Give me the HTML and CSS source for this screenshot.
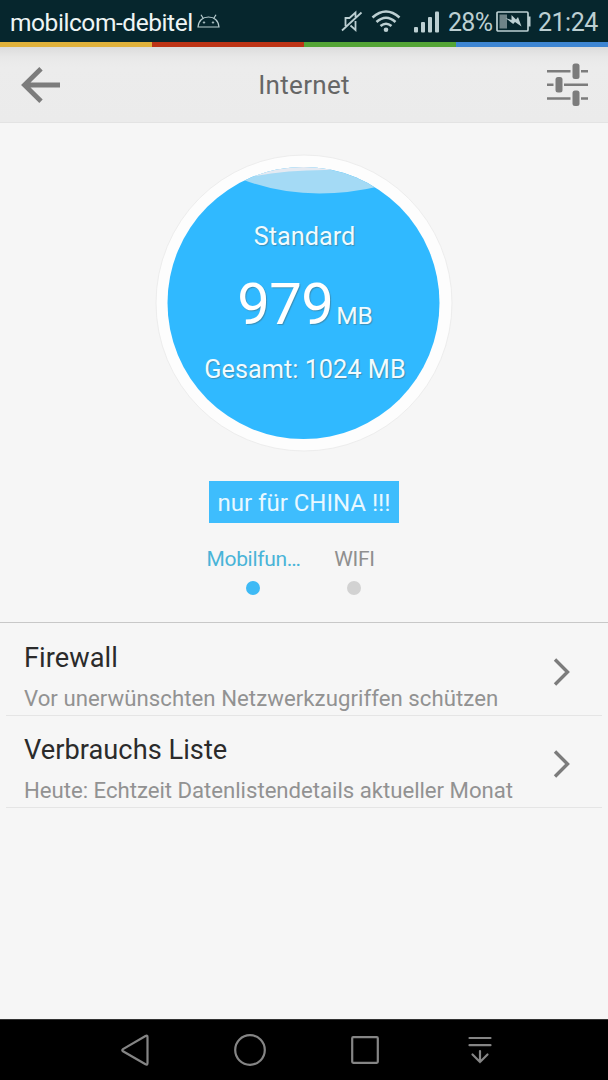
FILE: index.html
```html
<!DOCTYPE html>
<html lang="de">
<head>
<meta charset="utf-8">
<title>Internet</title>
<link rel="stylesheet" href="styles.css">
</head>
<body>
<div class="screen">
  <div class="status">
    <span class="carrier">mobilcom-debitel</span>
    <svg class="droid" width="23" height="14" viewBox="0 0 23 14" fill="none" stroke="#b9cdd0" stroke-width="1.2"><path d="M1 13C1.500 6.500 6 3 11.500 3S21.500 6.500 22 13ZM6 4 4 .700M17 4 19 .700"/><circle cx="7" cy="8.500" r=".8" fill="#b9cdd0" stroke-width=".6"/><circle cx="16" cy="8.500" r=".8" fill="#b9cdd0" stroke-width=".6"/></svg>
    <svg class="mute" width="22" height="23" viewBox="0 0 22 23" fill="none" stroke="#bccfd2" stroke-width="1.800"><path d="M1 20.500 20.500 2.500M4.500 16V8H8.500L14.500 2.500V7M14.500 11V20L9.500 15.500"/></svg>
    <svg class="wifi" width="30" height="23" viewBox="0 0 30 23" fill="none" stroke="#bccfd2" stroke-width="2.600"><path d="M1.500 7.500Q15-4.500 28.500 7.500M5.500 12Q15 3.500 24.500 12M9.500 16Q15 11.500 20.500 16"/><circle cx="15" cy="19.800" r="2.300" fill="#bccfd2" stroke="none"/></svg>
    <svg class="signal" width="26" height="22" viewBox="0 0 26 22" fill="#bccfd2"><rect x="0" y="16" width="4" height="5.500" rx="1"/><rect x="7" y="11" width="4" height="10.500" rx="1"/><rect x="14" y="6" width="4" height="15.500" rx="1"/><rect x="21" y="0.500" width="4" height="21" rx="1"/></svg>
    <span class="percent">28%</span>
    <svg class="battery" width="35" height="21" viewBox="0 0 35 21"><rect x="1" y="1" width="31" height="19" rx="1" fill="none" stroke="#bccfd2" stroke-width="1.700"/><path d="M32 5.500h2.500v10H32z" fill="#bccfd2"/><path d="M3.500 3.500h7.500v14H3.500z" fill="#6f8488"/><path d="m15.500 4 4.500 4.500 2-2.500L25.500 15.500l-6.500-4.500-1.800 2L9.500 7l6 2Z" fill="#bccfd2"/></svg>
    <span class="time">21:24</span>
  </div>
  <div class="stripe"><i class="yellow"></i><i class="red"></i><i class="green"></i><i class="blue"></i></div>
  <header class="header">
    <svg width="40" height="36" viewBox="0 0 40 36" fill="none" stroke="#7c7c7c" stroke-width="4.800"><path d="M39 18H4M20 1.800 3.500 18 20 34.200"/></svg>
    <h1 class="title">Internet</h1>
    <svg width="42" height="44" viewBox="0 0 42 44" fill="#7c7c7c"><path d="M1 7h23.500v2.500H1zM35 7h7v2.500h-7zM1 20.500h6.500V23H1zM18 20.500h24V23H18zM1 34.200h23.500v2.500H1zM35 34.200h7v2.500h-7z"/><rect x="26.500" y="0.500" width="7" height="15.500" rx="2.500"/><rect x="9.500" y="14" width="7" height="15.500" rx="2.500"/><rect x="26.500" y="27.500" width="7" height="15.500" rx="2.500"/></svg>
  </header>
  <main class="main">
    <div class="gauge">
      <svg class="water" width="298" height="298" viewBox="0 0 298 298"><defs><clipPath id="disc"><circle cx="148.500" cy="149" r="136"/></clipPath></defs><circle cx="149" cy="149" r="148" fill="#fdfdfd" stroke="#ededed"/><g clip-path="url(#disc)"><path d="M0 0h298v298H0z" fill="#30b9ff"/><path d="M86 25Q150 50 226 32L220 0H80Z" fill="#a4daf5"/><path d="M95 23Q135 15 180 16V0H90Z" fill="#e5eaf2"/></g></svg>
      <div class="plan">Standard</div>
      <div class="amount"><span class="value">979</span><span class="unit">MB</span></div>
      <div class="total">Gesamt: 1024 MB</div>
    </div>
    <div class="note">nur für CHINA !!!</div>
    <div class="tabs">
      <div class="tab active"><span class="label">Mobilfun…</span><i class="dot"></i></div>
      <div class="tab"><span class="label">WIFI</span><i class="dot"></i></div>
    </div>
  </main>
  <section class="list">
    <div class="row">
      <div class="row-text"><div class="name">Firewall</div><div class="desc unspaced">Vor unerwünschten Netzwerkzugriffen schützen</div></div>
      <svg width="17" height="28" viewBox="0 0 17 28" fill="none" stroke="#7c7c7c" stroke-width="3.400"><path d="M2 1.500 14.500 14 2 26.500"/></svg>
    </div>
    <div class="row">
      <div class="row-text"><div class="name">Verbrauchs Liste</div><div class="desc">Heute: Echtzeit Datenlistendetails aktueller Monat</div></div>
      <svg width="17" height="28" viewBox="0 0 17 28" fill="none" stroke="#7c7c7c" stroke-width="3.400"><path d="M2 1.500 14.500 14 2 26.500"/></svg>
    </div>
  </section>
  <nav class="nav">
    <svg width="28" height="32" viewBox="0 0 28 32"><path d="M26.500 3V29Q26.500 31.300 24.500 30.300L2 17.300Q.5 16.200 2 15.100L24.500 2Q26.500 1 26.500 3Z"/></svg>
    <svg width="32" height="32" viewBox="0 0 32 32"><circle cx="16" cy="16" r="14.800"/></svg>
    <svg width="28" height="28" viewBox="0 0 28 28"><rect x="1.200" y="1.200" width="25.600" height="25.600" rx="1"/></svg>
    <svg class="drop" width="24" height="28" viewBox="0 0 24 28" stroke-linecap="round"><path d="M1.500 2h21M1.500 9.200h21M12 15v11M4.500 18.500l7.500 7.500 7.500-7.500"/></svg>
  </nav>
</div>
</body>
</html>
```
FILE: styles.css
```css
* { box-sizing: border-box; }
body { margin: 0; font-family: Roboto, "Noto Sans", sans-serif; }
svg { display: block; flex: none; }

.screen {
  width: 608px;
  height: 1080px;
  display: flex;
  flex-direction: column;
  background: #f6f6f6;
  overflow: hidden;
  white-space: nowrap;
}

.status {
  height: 42px;
  flex: none;
  display: flex;
  align-items: center;
  padding: 2px 0 0 10px;
  background: #06262d;
  color: #bccfd2;
  font-size: 25px;
}
.carrier { width: 187px; color: #eef5f5; font-size: 24.5px; letter-spacing: -0.43px; }
.droid { margin-right: 121px; margin-top: -2px; }
.mute { margin-right: 9px; margin-top: -1px; }
.wifi { margin-right: 13px; margin-left: -1px; margin-top: -2px; }
.signal { margin-top: -1px; }
.percent { width: 48px; margin-left: 8px; letter-spacing: -0.7px; }
.battery { margin-right: 7px; margin-top: -2px; }
.time { letter-spacing: -0.5px; }

.stripe { height: 5px; flex: none; display: flex; }
.stripe i { flex: 1; }
.yellow { background: #e0b13a; }
.red { background: #bd3315; }
.green { background: #54a536; }
.blue { background: #3e86d3; }

.header {
  height: 76px;
  flex: none;
  display: flex;
  align-items: center;
  justify-content: space-between;
  padding: 0 20px 0 21px;
  background: linear-gradient(#dcdcdc, #e8e8e8 10px, #ececec 20px, #ebebeb);
  border-bottom: 1px solid #e3e3e3;
}
.title { margin: 0; font-size: 26px; font-weight: 400; letter-spacing: 0.3px; padding-left: 1px; color: #666; }

.main {
  height: 499px;
  flex: none;
  display: flex;
  flex-direction: column;
  align-items: center;
  padding-top: 31px;
}
.gauge {
  width: 298px;
  height: 298px;
  display: grid;
  grid-template: 98px 82px 118px / 1fr;
  justify-items: center;
  color: #f0fbff;
  text-shadow: 1px 1px 1px #3a8fb8;
  font-size: 25.3px;
  line-height: 30px;
}
.water { grid-area: 1 / 1 / 4 / 2; }
.plan { grid-area: 1 / 1; padding: 68px 0 0 1px; }
.amount { grid-area: 2 / 1; display: flex; align-items: baseline; padding: 20px 0 0 2px; }
.value { font-size: 58px; line-height: 64px; letter-spacing: -0.6px; color: #fff; }
.unit { margin-left: 3px; font-size: 24.5px; }
.total { grid-area: 3 / 1; padding: 21px 0 0 2px; }

.note {
  width: 190px;
  height: 42px;
  margin-top: 29px;
  background: #3ebdfd;
  color: #e8f8ff;
  font-size: 24px;
  line-height: 44px;
  text-align: center;
}
.tabs { display: flex; width: 202px; margin: 22px 0 0; }
.tab { flex: 1; display: flex; flex-direction: column; align-items: center; color: #8f8f8f; font-size: 21px; letter-spacing: -0.3px; line-height: 28px; }
.tab.active { color: #49b4d8; }
.dot { width: 14px; height: 14px; margin: 8px 1px 0 0; border-radius: 50%; background: #d2d2d2; }
.active .dot { background: #3ebaf5; }

.list { flex: 1; border-top: 1px solid #c8c8c8; padding: 1px 6px 0; }
.row {
  height: 92px;
  display: flex;
  align-items: flex-start;
  justify-content: space-between;
  padding: 14px 32px 0 18px;
  border-bottom: 1px solid #e5e5e5;
}
.row svg { margin-top: 20px; }
.name { color: #2b2b2b; font-size: 27.2px; letter-spacing: 0.04px; line-height: 40px; }
.desc { color: #929292; font-size: 22.2px; letter-spacing: -0.03px; line-height: 41px; }
.desc.unspaced { letter-spacing: 0.04px; }

.nav {
  height: 61px;
  flex: none;
  display: flex;
  align-items: center;
  gap: 85px;
  padding-left: 121px;
  background: #000;
  border-top: 1px solid #333;
}
.nav svg { fill: none; stroke: #858585; stroke-width: 2.2; }
.nav .drop { margin-left: 4px; }
```
